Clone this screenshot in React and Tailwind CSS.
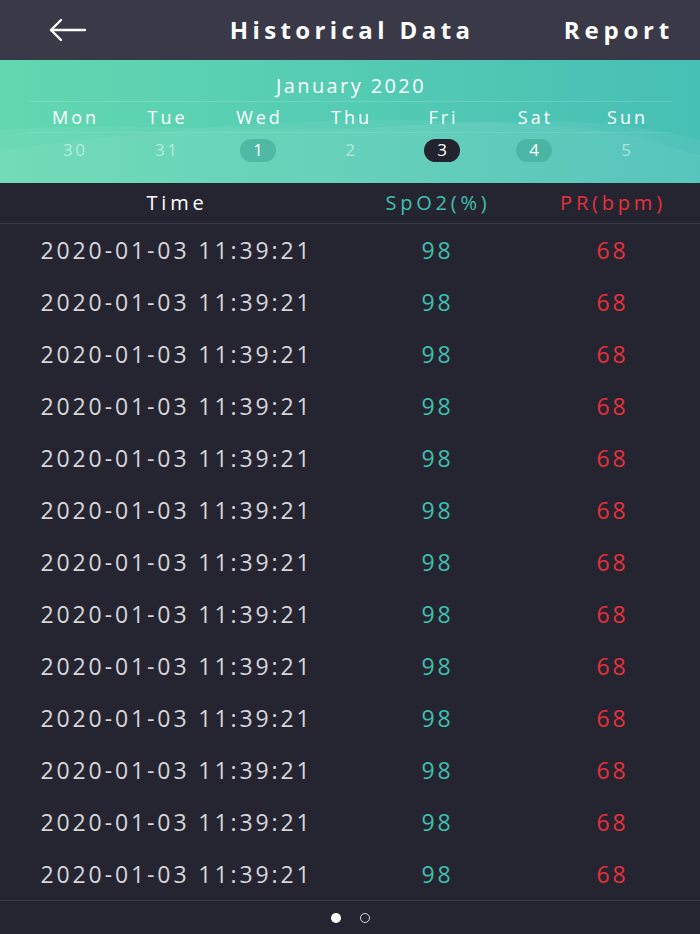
import React from 'react';

const days = [
    { name: 'Mon', date: '30', kind: 'faded' },
    { name: 'Tue', date: '31', kind: 'faded' },
    { name: 'Wed', date: '1', kind: 'soft' },
    { name: 'Thu', date: '2', kind: 'faded' },
    { name: 'Fri', date: '3', kind: 'active' },
    { name: 'Sat', date: '4', kind: 'soft' },
    { name: 'Sun', date: '5', kind: 'faded' },
];

const rows = Array.from({ length: 13 }, () => ({ time: '2020-01-03 11:39:21', spo2: 98, pr: 68 }));

const dateClass = {
    faded: 'text-white/50',
    soft: 'bg-[#3fa894]/60 text-white',
    active: 'bg-[#23232f] text-white',
};

const App = () => {
    return (
        <div
            className="w-[700px] h-[934px] bg-[#252532] flex flex-col overflow-hidden"
            style={{ fontFamily: '"Open Sans", "Noto Sans", sans-serif' }}
        >
            {/* top bar */}
            <div className="h-[60px] bg-[#393948] grid grid-cols-[1fr_auto_1fr] items-center px-[48px] shrink-0">
                <svg width="38" height="24" viewBox="0 0 38 24" fill="none" stroke="white" strokeWidth="2.4" strokeLinecap="round" strokeLinejoin="round">
                    <path d="M37 12H3" />
                    <path d="M13 2L3 12l10 10" />
                </svg>
                <h1 className="text-center text-white text-[24px] font-bold tracking-[4.4px] pl-[4px]">Historical Data</h1>
                <span className="text-right text-white text-[24px] font-bold tracking-[4.8px] -mr-[22px]">Report</span>
            </div>

            {/* calendar */}
            <div className="relative h-[123px] shrink-0 bg-gradient-to-r from-[#62d8b0] to-[#46bfb5] overflow-hidden">
                <svg className="absolute inset-0" width="700" height="123" viewBox="0 0 700 123" preserveAspectRatio="none">
                    <path d="M0 70 C 120 60, 250 75, 400 66 S 620 60, 700 80 L700 123 L0 123 Z" fill="white" opacity="0.06" />
                    <path d="M0 90 C 150 70, 300 55, 480 62 S 650 85, 700 95 L700 123 L0 123 Z" fill="white" opacity="0.05" />
                </svg>
                <div className="relative px-[28px] pt-[12px]">
                    <div className="text-center text-white text-[20px] tracking-[2.4px] leading-[28px] pl-[2px]">January 2020</div>
                    <div className="h-px bg-white/15 mt-[1px]" />
                    <div className="grid grid-cols-7 h-[30px] items-center">
                        {days.map((d) => (
                            <div key={d.name} className="text-center text-white text-[18px] tracking-[3px] pl-[3px]">{d.name}</div>
                        ))}
                    </div>
                    <div className="h-px bg-white/10" />
                    <div className="grid grid-cols-7 h-[34px] items-center">
                        {days.map((d) => (
                            <div key={d.name} className="flex justify-center">
                                <span className={`w-[36px] h-[23px] rounded-full flex items-center justify-center text-[17px] tracking-[2.5px] pl-[2.5px] ${dateClass[d.kind]}`}>
                                    {d.date}
                                </span>
                            </div>
                        ))}
                    </div>
                </div>
            </div>

            {/* table header */}
            <div className="grid grid-cols-[350px_172px_1fr] h-[41px] items-center border-b border-[#3a3a48] shrink-0 text-[20px] tracking-[3.8px]">
                <div className="text-center text-white pl-[4px]">Time</div>
                <div className="text-center text-[#3fc0ad] pl-[4px]">SpO2(%)</div>
                <div className="text-center text-[#e6303b] pl-[4px]">PR(bpm)</div>
            </div>

            {/* rows */}
            <div className="shrink-0">
                {rows.map((r, i) => (
                    <div key={i} className="grid grid-cols-[350px_172px_1fr] h-[52px] items-center text-[23px] tracking-[2.9px]">
                        <div className="text-center text-[#d6d6da] pl-[3px]">{r.time}</div>
                        <div className="text-center text-[#3fc0ad] pl-[3px]">{r.spo2}</div>
                        <div className="text-center text-[#e6303b] pl-[3px]">{r.pr}</div>
                    </div>
                ))}
            </div>

            {/* pager */}
            <div className="border-t border-[#3a3a48] flex-1 flex items-center justify-center gap-[19px]">
                <span className="w-[10px] h-[10px] rounded-full bg-white" />
                <span className="w-[10px] h-[10px] rounded-full border border-white/80" />
            </div>
        </div>
    );
};

export default App;
